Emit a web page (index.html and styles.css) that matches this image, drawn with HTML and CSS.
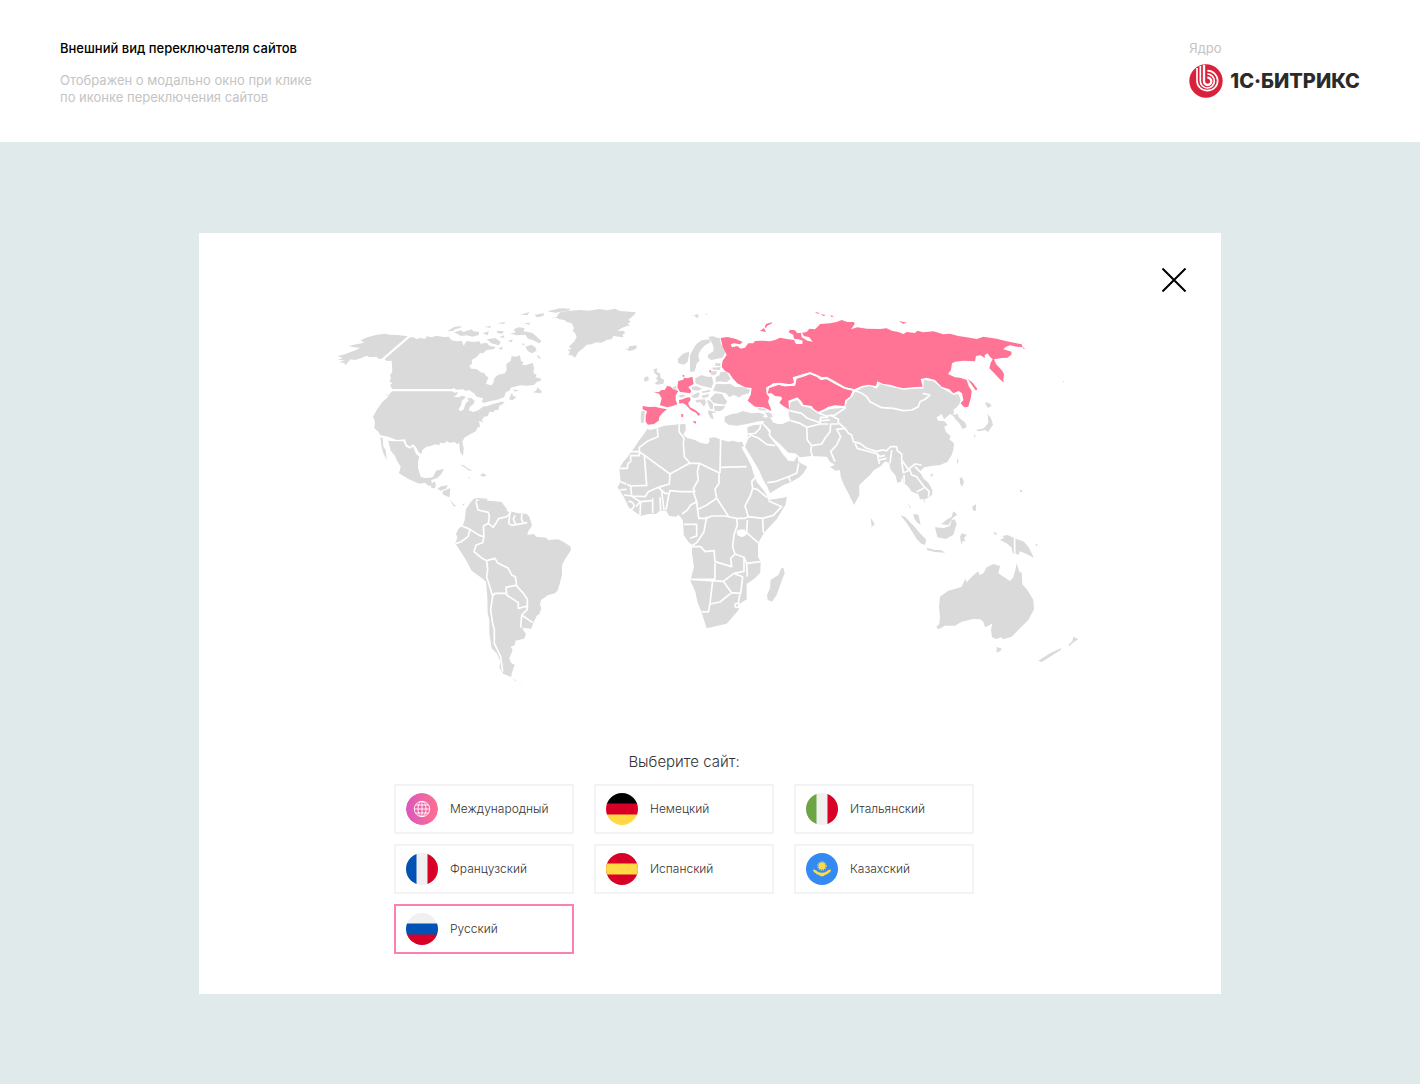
FILE: index.html
```html
<!DOCTYPE html>
<html lang="ru">
<head>
<meta charset="utf-8">
<meta name="viewport" content="width=device-width, initial-scale=1">
<title>Внешний вид переключателя сайтов</title>
<link rel="stylesheet" href="styles.css">
</head>
<body>
<header class="header">
  <div class="intro">
    <h1 class="intro-title">Внешний вид переключателя сайтов</h1>
    <p class="intro-text">Отображен о модально окно при клике<br>по иконке переключения сайтов</p>
  </div>
  <div class="core">
    <span class="core-label">Ядро</span>
    <div class="logo">
      <svg class="logo-mark" viewBox="0 0 102 102" aria-hidden="true">
        <circle cx="51" cy="51" r="50" fill="#d9213b"/>
        <g fill="none" stroke="#fff">
          <path stroke-width="5" d="M24 12V50A31 30 0 1 0 55 20"/>
          <path stroke-width="5" d="M34 6V50A21 21 0 1 0 55 30"/>
          <path stroke-width="7" d="M45 3V51A11 11 0 1 0 55 41"/>
        </g>
      </svg>
      <span class="logo-text">1С·БИТРИКС</span>
    </div>
  </div>
</header>

<main class="stage">
  <section class="modal" role="dialog" aria-labelledby="choose">
    <div class="modal-top">
      <button class="close" type="button" aria-label="Закрыть">
        <svg viewBox="0 0 24 24" aria-hidden="true"><path d="M.5.5L23.500 23.500M23.500.5L.5 23.500" fill="none" stroke="#000" stroke-width="2"/></svg>
      </button>
    </div>

    <svg class="map" viewBox="330 300 760 390" role="img" aria-label="Карта мира">
      <!-- North America -->
      <g transform="translate(330 300) scale(.33333)">
        <path class="land" d="M22 168L45 163 62 156 78 150 90 143 72 142 56 138 72 134 95 130 103 126 91 122 104 115 118 110 140 104 165 101 180 104 205 105 233 109 155 176 146 177 140 170 118 172 110 167 95 174 75 180 62 178 50 190 28 187 45 181 24 180 38 174ZM40 192l14-5-6 7z"/>
        <path class="land" d="M240 112L250 112 262 118 270 113 285 117 290 109 305 112 320 107 340 111 356 110 365 121 380 124 395 122 401 137 410 123 430 126 448 124 452 131 470 128 478 137 497 141 490 148 470 150 460 159 450 160 440 170 425 180 427 190 418 197 423 206 440 207 452 217 463 219 468 228 475 232 468 252 485 256 490 248 493 235 505 224 525 220 530 210 529 192 542 183 545 168 558 170 570 166 573 184 580 185 577 195 590 195 608 188 612 205 610 218 620 225 616 232 634 236 632 242 620 246 612 255 590 257 570 256 555 260 544 262 538 272 528 276 522 292 500 300 480 303 462 309 456 305 459 295 440 290 432 280 424 275 420 270 405 272 400 268 380 269 370 264 366 267 187 267 180 255 187 250 178 244 183 235 180 225 187 216 185 182 170 183 164 177Z"/>
        <path class="land" d="M187 274L366 274 374 278 385 276 379 286 370 290 385 292 397 287 408 291 395 303 394 315 386 326 390 334 400 330 408 308 416 302 412 294 425 295 434 303 430 313 420 320 416 331 430 336 445 331 458 320 472 318 490 312 515 305 525 306 518 312 508 317 505 330 495 330 490 337 478 335 474 348 462 350 456 360 460 368 447 362 450 380 441 384 438 394 420 403 403 413 397 425 401 445 399 468 390 455 388 430 380 432 375 426 358 428 350 423 345 430 330 428 328 436 316 433 305 437 290 440 277 450 274 463 264 454 258 440 248 433 240 440 230 433 225 418 200 420 175 410 150 405 146 396 133 385 135 365 129 350 140 330 155 308 175 290 180 280Z"/>
        <path class="land" d="M175 422L195 424 220 424 228 440 240 446 249 440 258 462 268 470 264 485 264 505 272 530 285 534 300 533 310 530 318 512 342 506 334 522 322 534 312 537 304 541 306 555 296 558 285 548 268 551 235 537 207 520 212 500 200 480 195 467 182 452ZM151 412L158 414 160 440 167 450 170 480 160 460 155 440ZM303 553L313 544 318 555 314 565 304 564ZM322 567L333 559 354 556 348 566 332 572ZM336 575L361 564 358 592 344 586ZM390 494L402 496 413 505 430 514 415 511 404 502ZM450 526L460 520 470 527 460 530ZM424 598l20-4 28 2v4zM413 531l7 2-3 3z"/>
        <path class="land" d="M608 277L618 272 623 262 636 275 632 280ZM537 298L542 286 546 279 550 289 560 290 548 301ZM550 269L568 270 555 275ZM166 281l14 8-4 2z"/>
        <path class="land" d="M352 94L372 81 396 78 390 84 375 88 368 93ZM372 97L392 91 400 96 425 88 430 94 448 96 446 105 428 110 410 106 393 108ZM470 118L496 114 512 126 506 136 484 130ZM458 100L476 94 474 106ZM463 80L484 78 480 84ZM500 92L522 94 516 101 502 99ZM508 112L520 106 524 114ZM533 124L548 118 546 126ZM505 145L518 140 516 150ZM540 100L556 98 552 88 566 82 584 84 580 94 606 98 618 108 634 124 628 130 608 120 594 116 586 104 560 106ZM586 140L604 134 616 142 620 152 606 160 594 154ZM614 44L642 40 640 48 620 52ZM652 34L690 25 720 26 718 31 676 38ZM572 44L598 36 592 46ZM500 70L526 66 522 72ZM582 70L600 68 598 74ZM575 130l10 2-5 5zM620 165l8 4 6 8-10-4z"/>
      </g>

      <!-- Greenland and Iceland -->
      <g class="land" transform="translate(560 300) scale(.33333)">
        <path d="M-10 52L-8 46 0 37 20 33 60 30 85 32 120 27 140 31 165 26 180 33 228 37 222 45 205 60 212 64 203 72 210 76 190 82 180 88 172 94 190 92 196 98 188 104 190 112 160 108 155 117 140 120 125 128 108 127 95 133 80 134 68 146 55 156 45 173 35 166 25 165 30 155 23 150 35 146 26 140 42 125 50 112 45 98 38 94 42 84 35 70 20 66 14 60 -2 58 -8 54 -28 53Z"/>
        <path d="M193 145L205 147 207 139 228 136 231 143 222 149 208 153ZM0 30l10-4-4 6zM388 45l14 2 8-4 2 10-8-4zM434 41l10 0-5 3z"/>
      </g>

      <!-- Europe -->
      <g transform="translate(630 310) scale(.33333)">
        <g class="land">
          <path d="M145 160L143 148 154 136 165 128 177 126 177 135 173 155 162 164ZM180 182L180 135 195 108 202 100 215 91 238 88 241 97 225 106 214 118 207 130 205 140 209 152 200 160 198 172 193 184 184 186ZM235 80L250 79 262 83 270 84 272 100 282 115 286 127 278 143 258 147 244 150 235 145 233 135 250 124 251 110 245 98Z"/>
          <path d="M70 178L82 175 80 186 90 190 92 204 103 210 100 221 82 224 74 220 84 213 78 205 84 198 74 190ZM42 203L54 199 57 210 44 216Z"/>
          <path d="M34 304L45 303 41 340 33 338 32 320Z"/>
          <path d="M196 205L215 195 230 200 246 200 250 218 245 234 228 230 210 226 196 220ZM257 201L268 196 272 186 290 186 302 206 290 217 270 214 257 217ZM236 184L262 184 256 195 246 196ZM255 160L272 160 270 168 256 167ZM246 173L272 171 270 180 250 179Z"/>
          <path d="M249 242L258 221 280 223 300 221 315 230 340 232 360 239 357 250 335 256 328 263 320 258 310 255 298 262 288 250 270 246ZM240 266L256 250 276 252 286 268 292 275 285 284 262 281 250 278ZM252 288L286 288 280 298 270 304 254 302Z"/>
          <path d="M184 232L198 228 217 236 204 242 188 240ZM212 245L240 239 240 245 220 249ZM183 260L190 254 205 247 209 252 205 262 192 264ZM214 257L238 251 233 262 218 264ZM231 270L240 272 250 284 248 298 241 298 236 285ZM196 270L225 268 228 278 222 290 210 276 200 278ZM235 300L246 304 262 306 246 310 252 328 242 324 234 310ZM144 258L158 253 167 258 154 263ZM128 232L139 227 139 240 132 239Z"/>
          <path d="M284 320L305 312 322 310 338 303 365 310 385 308 402 312 408 333 385 334 368 338 350 342 320 347 296 344 284 335Z"/>
          <path d="M382 293L406 297 408 302 388 301ZM404 307L420 308 432 322 415 322ZM195 15l10-2 0 12-5-5z"/>
        </g>
        <g class="active">
          <path d="M145 213L160 209 162 203 172 205 187 200 191 222 175 231 184 243 180 250 160 247 150 246 142 232Z"/>
          <path d="M70 245L86 247 94 240 104 240 112 227 122 230 130 238 145 243 137 256 137 270 142 283 128 288 112 292 90 286 95 265 88 252Z"/>
          <path d="M147 270L158 268 168 263 180 262 182 270 174 280 180 292 196 300 211 313 206 318 198 308 182 300 168 285 158 279 148 281ZM188 334L199 334 196 342ZM154 312L160 312 159 322 154 321Z"/>
          <path d="M38 288L56 291 75 290 90 294 111 298 98 308 88 320 86 332 72 342 54 344 47 335 47 318 51 304 38 298Z"/>
          <path d="M158 195h5v5h-5zM238 181h5v4h-5z"/>
        </g>
      </g>

      <!-- Asia -->
      <g transform="translate(720 300) scale(.33333)">
        <path class="land" d="M405 275L430 262 450 258 470 266 480 252 510 260 530 264 550 269 585 266 610 266 612 240 640 244 665 264 700 284 716 283 722 300 718 312 710 322 700 330 705 345 712 340 716 352 736 368 740 382 728 387 718 370 705 356 700 348 690 342 672 358 665 342 650 352 654 362 672 363 683 374 673 380 678 396 692 408 688 418 702 430 700 450 695 465 682 486 660 495 640 497 612 502 600 515 610 535 626 550 637 570 636 585 618 597 600 598 595 582 575 575 565 560 552 548 546 530 543 545 532 548 526 525 512 510 508 490 496 484 480 500 462 510 450 525 418 555 418 585 402 615 385 580 372 555 362 530 360 510 346 512 330 500 345 495 330 485 320 470 275 468 240 472 226 460 205 458 188 440 172 425 155 412 145 390 130 370 138 352 150 352 160 368 178 372 195 368 212 362 206 346 206 333 212 307 232 300 245 318 270 324 295 341 330 327 375 323 382 302 396 290Z"/>
        <path class="land" d="M82 382L100 376 130 373 148 400 165 432 172 438 188 462 205 482 222 484 232 468 236 486 262 500 250 520 238 532 215 545 190 555 150 580 142 560 130 540 118 512 98 478 75 440 84 418Z"/>
        <path fill="#fff" d="M152 290L175 284 188 292 178 305 185 325 194 340 188 350 198 362 190 372 172 372 160 358 154 338Z"/>
        <g class="active">
          <path d="M2 114L22 111 48 117 68 126 60 133 42 130 32 133 36 142 52 138 62 146 75 143 85 130 100 130 105 123 130 122 150 124 165 120 180 113 205 118 222 120 228 132 247 132 248 122 236 118 222 116 220 104 206 97 210 89 225 91 232 100 243 98 245 112 262 122 278 125 268 112 252 108 246 98 260 96 268 86 285 88 295 78 300 72 330 70 350 66 365 60 382 66 402 66 404 72 393 88 412 82 440 86 480 87 500 85 515 92 535 96 550 102 560 96 585 99 592 92 610 97 640 94 670 103 690 101 715 108 740 112 770 117 790 110 830 116 860 124 905 133 908 142 890 140 870 136 858 140 850 148 875 155 874 164 862 173 845 174 822 178 828 192 845 210 852 222 850 240 852 248 838 236 825 222 808 205 812 188 818 178 810 170 802 160 794 166 795 175 782 166 768 168 765 184 730 182 705 185 696 190 693 210 684 222 705 232 720 233 740 240 747 260 755 272 753 292 745 320 733 322 722 310 730 300 726 280 716 273 700 280 688 268 665 260 645 240 620 233 602 237 608 260 585 261 550 265 530 260 510 254 490 252 472 244 468 258 445 254 425 258 403 268 375 262 345 244 320 230 306 232 290 224 270 217 250 222 218 232 222 248 210 253 180 248 160 250 138 263 140 282 148 292 144 305 155 333 130 322 105 320 83 302 92 285 95 264 75 262 52 250 38 235 28 220 14 212 5 200 8 182 20 165 8 140Z"/>
          <path d="M148 262L175 254 195 259 225 257 230 236 250 230 270 223 290 230 302 240 320 238 345 252 375 267 398 272 390 290 376 300 373 318 345 316 325 320 312 328 295 335 282 328 275 318 250 314 244 304 232 292 205 302 207 328 190 318 178 308 186 296 184 290 165 288 155 280 143 280Z"/>
          <path d="M743 236L758 248 772 266 768 272 756 256ZM120 93L132 84 138 97 128 94ZM134 82L138 72 155 67 156 70 142 77 138 84ZM285 36l15 3-8 2zM302 43l16 2-8 3zM332 46l10 3-8 2zM537 63l24 5-12 3zM908 142l8 4-6 0z"/>
        </g>
        <g class="border">
          <path d="M148 262L175 252 195 256 223 254 226 234 250 226 270 219 290 227 304 236 320 234 345 248 375 264 403 270"/>
          <path d="M405 272L422 278 440 290 450 305 485 323 520 325 550 332 575 330 595 320 600 305 615 298 630 285 608 280"/>
          <path d="M330 345L355 358 355 368 375 385 385 400 395 405 400 425 420 430 440 445 470 455 485 450 500 452 512 440 530 440 532 452 545 462 545 480 565 508 585 492 605 495"/>
          <path d="M405 430L412 445 440 453 472 462 480 470 495 466M375 385L350 388 362 410 350 435 332 455 345 485M275 437L305 432 315 415 330 395 332 372 355 372M260 380L262 420 275 437 272 452 278 470M212 362L240 370 260 382 300 372 325 372M208 332L245 340 262 355 300 368 302 352 325 352M295 339L320 348 345 345 378 322M302 362L330 360"/>
          <path d="M130 373L150 392 148 405 172 436M84 415L92 405 115 414 140 433 165 437M82 402L105 400 120 385 122 373M142 548L165 545 205 530 212 545M205 530L230 520 236 490"/>
          <path d="M472 462L478 492M478 480L500 475M515 450L510 490M545 485L550 518 570 510 575 525 590 530 612 560 628 575 625 590M585 500L605 520M553 548L552 525M590 575L612 565M700 342L718 335M130 350L140 345"/>
        </g>
      </g>

      <!-- South-East Asia and Oceania -->
      <g transform="translate(820 390) scale(.33333)">
        <g class="land">
          <path d="M360 620L385 602 405 597 425 590 436 566 440 577 455 560 475 543 478 555 490 550 500 532 520 522 540 528 535 550 553 562 570 573 580 562 586 540 590 520 598 545 605 548 607 583 622 600 640 630 642 658 625 690 600 715 575 740 550 748 542 742 530 747 516 742 513 720 517 700 508 706 495 712 490 695 480 688 460 687 425 695 405 707 375 707 355 718 349 711 358 702 360 680 357 650Z"/>
          <path d="M530 771L546 776 540 784 530 788ZM655 812L690 790 724 774 722 780 695 797 665 816ZM745 764L757 754 760 740 775 748 762 756 748 768Z"/>
          <path d="M540 450L552 443 548 438 562 435 585 445 612 455 626 472 642 504 620 492 600 484 595 494 578 490 574 472 560 460ZM519 425L532 430 526 436ZM646 463l9-2-6 5z"/>
          <path d="M241 376L255 380 270 396 285 412 302 432 318 448 316 464 305 462 290 447 272 418 258 396ZM280 372L295 374 302 404 292 398 283 386ZM262 338L272 350 272 356ZM320 473L345 480 362 480 376 488 345 486 322 481ZM345 412L372 414 390 408 395 390 404 388 410 402 400 434 378 447 352 442ZM363 403L382 388 394 382 400 364 412 374 398 384 385 405ZM420 440L425 430 440 434 432 445 437 455 428 452 424 464Z"/>
          <path d="M419 265L426 262 432 275 426 291 420 280ZM456 350L468 343 468 362 460 362ZM411 207L416 210 412 225ZM330 254L340 250 336 261ZM152 383L164 402 155 412ZM494 38L516 46 504 54ZM503 72L513 84 519 104 504 126 496 120 476 124 468 120 492 115 505 98ZM462 133l5 4-3 8zM310 328l5 2-2 8z"/>
        </g>
        <path class="border" d="M584 438V500"/>
      </g>

      <!-- South America -->
      <g transform="translate(440 480) scale(.33333)">
        <path class="land" d="M78 88L92 66 106 54 108 66 125 56 145 62 165 64 185 66 195 80 208 94 235 100 260 102 268 110 276 136 264 155 262 165 282 162 288 170 318 173 325 180 355 178 375 188 392 200 392 212 375 238 366 255 366 285 354 330 345 340 325 345 303 360 300 375 304 385 298 402 290 408 280 428 274 446 246 443 258 463 252 476 226 482 225 495 212 500 218 510 208 535 213 548 224 555 215 580 214 591 190 582 178 562 182 545 170 520 155 505 148 460 148 420 143 400 142 350 138 305 122 292 95 272 78 240 60 212 46 190 52 172 48 162 56 145 68 138 74 120ZM6 42L30 26 28 52 22 48ZM28 58L45 76 52 74 42 80ZM66 74l8-4-2 6zM0 22l20-5-4 10zM218 594l12 10-4 0zM236 608l14 12-8-6z"/>
        <path class="border" d="M108 66L114 90 145 97 148 110 145 130 160 142 176 116 200 110 212 98 200 88M145 130L130 138 132 170 118 166 90 148 66 138M90 148L84 170 62 186 48 190M132 170L128 188 108 195 102 215 125 234 140 242 165 235 172 248 205 265 215 285 226 290 230 318 250 340 262 358 262 378 235 385 235 368 200 345 198 322 228 316M200 340L165 340 158 348 146 310 140 290 143 270 140 242M158 348L152 390 158 430 163 450 163 490 182 530 188 575M262 378L262 388 245 405 242 443M245 405L278 428M210 98L206 130 215 136 250 130 262 128M225 105L220 118 228 134M246 102L244 116 250 130"/>
      </g>

      <!-- Africa -->
      <g transform="translate(600 410) scale(.33333)">
        <path class="land" d="M105 110L118 90 132 72 142 56 150 60 172 55 190 48 215 45 240 43 256 42 258 58 250 75 262 84 285 90 300 98 320 102 328 97 328 84 345 82 360 88 385 95 400 92 415 97 426 95 432 108 424 112 440 140 455 170 460 190 470 215 490 240 500 255 504 270 530 266 561 261 556 285 530 328 492 368 474 400 474 440 482 455 481 488 465 505 440 522 440 568 418 582 416 600 380 641 360 646 320 655 312 630 304 605 292 575 286 545 271 512 282 470 276 430 276 405 265 395 251 375 250 345 248 330 236 314 228 320 208 318 198 302 180 302 168 312 148 312 122 317 105 306 86 292 72 262 60 242 53 232 62 215 58 175 70 155 82 142Z"/>
        <path class="land" d="M512 510L535 495 544 475 550 473 554 490 545 512 530 555 516 575 503 570 501 555 510 535Z"/>
        <path class="border" d="M172 55L174 80 145 92 118 112 118 125 90 125M118 125L118 137 92 137 92 155 84 160 82 175 58 175M118 125L210 192 268 160 298 160 357 188 360 188 362 88M133 137L140 226 92 228 62 215M238 43L237 65 252 85 250 100 253 140 270 160M362 172L440 170M210 192L208 222 175 232 145 245 135 260 95 258 92 228M298 160L292 185 295 210 280 235 284 245 240 245 210 242 205 262 198 300M175 232L195 250 205 250M280 245L290 275 272 285 262 300 246 312M357 188L357 220 345 238 350 265 385 318M290 300L320 285 350 265M290 275L296 325 320 325 335 318 375 318 410 325 435 325 445 320 435 288 452 255 458 235 472 238 500 262M458 235L455 215 468 200M505 272L545 290 520 316 488 325 445 320M488 325L490 368M320 320L312 365 290 398 275 408M252 343L290 343 290 378 270 385M410 325L412 345 402 375 398 410 405 432 392 445 395 470 345 455 342 422 315 425 302 410 275 410M410 368L440 368 474 398M405 432L432 442 440 460 482 455M345 460L345 508 272 508M272 508L370 514 402 490 432 484 432 445M440 460L442 500M370 514L395 548 422 550 428 500 405 492M338 512L330 580 325 606 305 605M330 582L360 576 395 548M420 550L415 580M185 245L192 300M158 265L158 310M180 262L182 302M122 275L155 272M122 275L120 315M95 258L120 275 108 290M72 255L95 258M85 275a12 12 0 1 1 8 24M60 240L80 238M440 368L442 330"/>
        <path fill="#fff" d="M412 360L434 358 440 374 426 382 412 376Z"/>
        <circle class="border" cx="411" cy="586" r="6"/>
      </g>
      <path class="land" d="M1020 490h2v2h-2zM1036 545h1v1h-1zM1063 381h1v1h-1zM986 402l5 2-3 2zM626 484h1v1h-1z"/>
    </svg>

    <div class="chooser">
      <h2 class="chooser-title" id="choose">Выберите сайт:</h2>
      <div class="sites">
        <button class="site" type="button">
          <svg class="flag" viewBox="0 0 32 32" aria-hidden="true">
            <defs><linearGradient id="world"><stop stop-color="#db57bd"/><stop offset="1" stop-color="#ff6f8f"/></linearGradient></defs>
            <circle cx="16" cy="16" r="16" fill="url(#world)"/>
            <g fill="none" stroke="#fff" stroke-width=".9"><circle cx="16" cy="16" r="7.700"/><ellipse cx="16" cy="16" rx="4" ry="7.700"/><path d="M16 8.300v15.400M8.300 16h15.400M9.500 12h13M9.500 20h13"/></g>
          </svg>
          <span>Международный</span>
        </button>
        <button class="site" type="button">
          <svg class="flag" viewBox="0 0 32 32" aria-hidden="true"><path fill="#000" d="M0 0h32v11H0z"/><path fill="#d80027" d="M0 10.500h32v11.500H0z"/><path fill="#ffda44" d="M0 21.500h32V32H0z"/></svg>
          <span>Немецкий</span>
        </button>
        <button class="site" type="button">
          <svg class="flag" viewBox="0 0 32 32" aria-hidden="true"><path fill="#f0f0f0" d="M0 0h32v32H0z"/><path fill="#6da544" d="M0 0h10.500v32H0z"/><path fill="#d80027" d="M21.500 0H32v32H21.500z"/></svg>
          <span>Итальянский</span>
        </button>
        <button class="site" type="button">
          <svg class="flag" viewBox="0 0 32 32" aria-hidden="true"><path fill="#f0f0f0" d="M0 0h32v32H0z"/><path fill="#0052b4" d="M0 0h10.500v32H0z"/><path fill="#d80027" d="M21.500 0H32v32H21.500z"/></svg>
          <span>Французский</span>
        </button>
        <button class="site" type="button">
          <svg class="flag" viewBox="0 0 32 32" aria-hidden="true"><path fill="#d80027" d="M0 0h32v32H0z"/><path fill="#ffda44" d="M0 10.500h32v11H0z"/></svg>
          <span>Испанский</span>
        </button>
        <button class="site" type="button">
          <svg class="flag" viewBox="0 0 32 32" aria-hidden="true"><path fill="#338af3" d="M0 0h32v32H0z"/><circle cx="16" cy="13" r="3.500" fill="#ffda44"/><circle cx="16" cy="13" r="4" fill="none" stroke="#ffda44" stroke-width="1.400" stroke-dasharray="1.100 1"/><path fill="#ffda44" d="M7 16.500c2 0 3.500.8 4.500 2 2.600 1.600 6.400 1.600 9 0 1-1.200 2.500-2 4.500-2 0 1.500-1 3-2.500 3.500-.8 1.200-2 1.800-3.500 1.800-.6 1-1.500 1.500-3 1.500s-2.400-.5-3-1.500c-1.500 0-2.700-.6-3.500-1.800-1.500-.5-2.500-2-2.500-3.500z"/></svg>
          <span>Казахский</span>
        </button>
        <button class="site site-current" type="button" aria-current="true">
          <svg class="flag" viewBox="0 0 32 32" aria-hidden="true"><path fill="#f0f0f0" d="M0 0h32v11H0z"/><path fill="#0052b4" d="M0 10.500h32V22H0z"/><path fill="#d80027" d="M0 21.500h32V32H0z"/></svg>
          <span>Русский</span>
        </button>
      </div>
    </div>
  </section>
</main>
</body>
</html>
```
FILE: styles.css
```css
* {
  box-sizing: border-box;
}

body {
  margin: 0;
  min-height: 100vh;
  display: flex;
  flex-direction: column;
  background: #e1eaea;
  color: #333;
  font-family: Inter, "Open Sans", sans-serif;
}

.header {
  display: flex;
  justify-content: space-between;
  padding: 40px 60px 36px;
  background: #fff;
  font-size: 13px;
  line-height: 17px;
}

.intro-title {
  margin: 0 0 15px;
  color: #000;
  font-size: 13px;
  font-weight: 500;
  line-height: 17px;
}

.intro-text {
  margin: 0;
  color: #c4c4c4;
}

.core {
  display: flex;
  flex-direction: column;
  gap: 7px;
}

.core-label {
  color: #c4c4c4;
}

.logo {
  display: flex;
  align-items: center;
  gap: 7px;
}

.logo-mark {
  width: 34px;
  height: 34px;
}

.logo-text {
  color: #2b2b2b;
  font-size: 20px;
  font-weight: 800;
  line-height: 34px;
}

.stage {
  flex: 1;
  padding: 91px 24px 90px;
}

.modal {
  max-width: 1022px;
  margin: 0 auto;
  padding: 35px 35px 40px;
  background: #fff;
}

.modal-top {
  display: flex;
  justify-content: flex-end;
  margin-bottom: 8px;
}

.close {
  width: 24px;
  height: 24px;
  padding: 0;
  border: 0;
  background: none;
  cursor: pointer;
}

.close svg {
  display: block;
}

.map {
  display: block;
  width: 100%;
  max-width: 760px;
  margin: 0 auto 62px;
}

.land {
  fill: #dadada;
}

.active {
  fill: #ff7394;
}

.border {
  fill: none;
  stroke: #fff;
  stroke-width: 5;
  stroke-linejoin: round;
}

.chooser {
  max-width: 580px;
  margin: 0 auto;
  position: relative;
  right: 26px;
}

.chooser-title {
  margin: 0 0 12px;
  font-size: 15px;
  font-weight: 300;
  line-height: 20px;
  text-align: center;
}

.sites {
  display: grid;
  grid-template-columns: repeat(auto-fill, 180px);
  gap: 10px 20px;
}

.site {
  display: flex;
  align-items: center;
  gap: 12px;
  height: 50px;
  padding: 0 10px;
  border: 2px solid #f3f3f5;
  background: #fff;
  color: #333;
  font: 300 12px/16px Inter, "Open Sans", sans-serif;
  cursor: pointer;
}

.site-current {
  border-color: #fa82b3;
}

.flag {
  width: 32px;
  height: 32px;
  border-radius: 50%;
}
```
